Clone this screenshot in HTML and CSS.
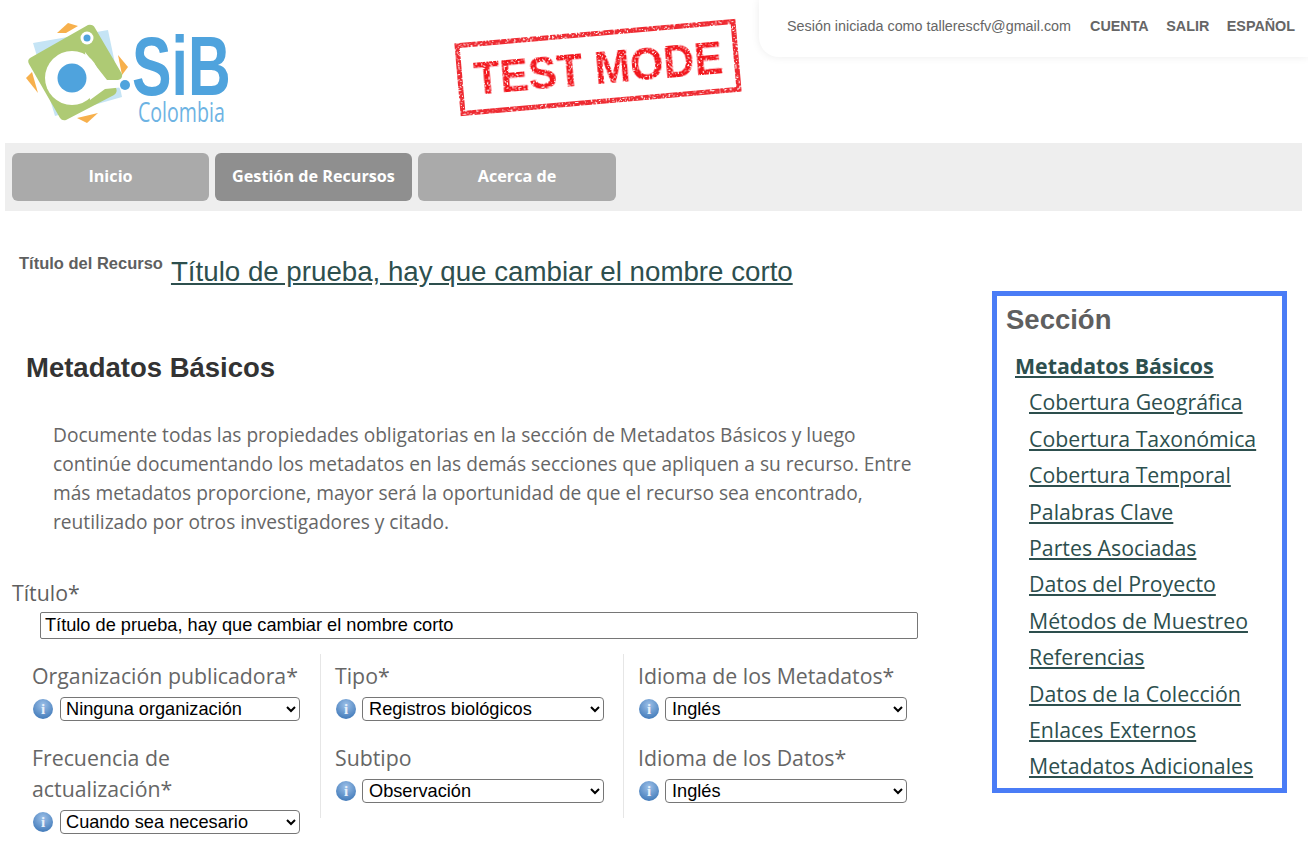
FILE: index.html
```html
<!DOCTYPE html>
<html lang="es">
<head>
<meta charset="UTF-8" />
<title>Metadatos Básicos</title>
<link rel="stylesheet" href="styles.css">
</head>
<body>

<svg class="defs" width="0" height="0">
  <filter id="rough" x="-5%" y="-5%" width="110%" height="110%">
    <feTurbulence type="fractalNoise" baseFrequency="0.55" numOctaves="2" seed="4" result="noise"/>
    <feColorMatrix in="noise" type="matrix" values="0 0 0 0 0  0 0 0 0 0  0 0 0 0 0  0 0 0 -7 4.9" result="holes"/>
    <feComposite in="SourceGraphic" in2="holes" operator="in"/>
    <feGaussianBlur stdDeviation="0.35"/>
  </filter>
</svg>

<div class="header">
  <svg class="logo" width="232" height="130" viewBox="0 0 232 130">
    <polygon points="57,33 68,23 78,26 66,33" fill="#f7b04c"/>
    <polygon points="118,55 128,67 122,75" fill="#f7b04c"/>
    <polygon points="26,78 32,72 38,93" fill="#f7b04c"/>
    <polygon points="77,118 98,113 87,123" fill="#f7b04c"/>
    <polygon points="33,43 108,30 122,97 55,116" fill="#c5e4f5"/>
    <path d="M30,58 L88,25 Q93,24 95,28 L122,74 Q123,79 118,80 L116,88 Q118,92 114,95 L66,120 Q62,121 60,118 L29,64 Q27,60 30,58 Z" fill="#aeca74"/>
    <circle cx="72" cy="78" r="27" fill="#fff"/>
    <polygon points="85,52 107,80 123,80 125,87 105,89 90,100" fill="#fff"/>
    <circle cx="72" cy="78" r="14.5" fill="#4fa3dd"/>
    <circle cx="87" cy="38" r="6.5" fill="#fff"/>
    <circle cx="87" cy="38" r="3.5" fill="#4fa3dd"/>
    <circle cx="125" cy="85" r="6.5" fill="#fff"/>
    <circle cx="125" cy="85" r="5" fill="#4fa3dd"/>
    <text transform="translate(132 95) scale(.705 1)" class="logo-sib">SiB</text>
    <text transform="translate(138 122) scale(.7 1)" class="logo-col">Colombia</text>
  </svg>

  <div class="stamp"><span>TEST MODE</span></div>

  <div class="user-bar">
    <span class="user-text">Sesión iniciada como tallerescfv@gmail.com</span>
    <a class="user-link">CUENTA</a>
    <a class="user-link">SALIR</a>
    <a class="user-link">ESPAÑOL</a>
  </div>
</div>

<div class="nav">
  <a class="nav-btn">Inicio</a>
  <a class="nav-btn active">Gestión de Recursos</a>
  <a class="nav-btn">Acerca de</a>
</div>

<div class="resource-title">
  <span class="resource-label">Título del Recurso</span>
  <a class="resource-link">Título de prueba, hay que cambiar el nombre corto</a>
</div>

<div class="content">
  <div class="main">
    <h1>Metadatos Básicos</h1>
    <p class="intro">Documente todas las propiedades obligatorias en la sección de Metadatos Básicos y luego continúe documentando los metadatos en las demás secciones que apliquen a su recurso. Entre más metadatos proporcione, mayor será la oportunidad de que el recurso sea encontrado, reutilizado por otros investigadores y citado.</p>

    <label class="title-label">Título*</label>
    <input class="title-input" type="text" value="Título de prueba, hay que cambiar el nombre corto">

    <div class="fields">
      <div class="col">
        <div class="field">
          <label>Organización publicadora*</label>
          <div class="control"><span class="info">i</span><select><option>Ninguna organización</option></select></div>
        </div>
        <div class="field">
          <label>Frecuencia de actualización*</label>
          <div class="control"><span class="info">i</span><select><option>Cuando sea necesario</option></select></div>
        </div>
      </div>
      <div class="col">
        <div class="field">
          <label>Tipo*</label>
          <div class="control"><span class="info">i</span><select><option>Registros biológicos</option></select></div>
        </div>
        <div class="field">
          <label>Subtipo</label>
          <div class="control"><span class="info">i</span><select><option>Observación</option></select></div>
        </div>
      </div>
      <div class="col">
        <div class="field">
          <label>Idioma de los Metadatos*</label>
          <div class="control"><span class="info">i</span><select><option>Inglés</option></select></div>
        </div>
        <div class="field">
          <label>Idioma de los Datos*</label>
          <div class="control"><span class="info">i</span><select><option>Inglés</option></select></div>
        </div>
      </div>
    </div>
  </div>

  <div class="side">
    <h2>Sección</h2>
    <a class="side-current">Metadatos Básicos</a>
    <a>Cobertura Geográfica</a>
    <a>Cobertura Taxonómica</a>
    <a>Cobertura Temporal</a>
    <a>Palabras Clave</a>
    <a>Partes Asociadas</a>
    <a>Datos del Proyecto</a>
    <a>Métodos de Muestreo</a>
    <a>Referencias</a>
    <a>Datos de la Colección</a>
    <a>Enlaces Externos</a>
    <a>Metadatos Adicionales</a>
  </div>
</div>

</body>
</html>
```

FILE: styles.css
```css
body {
  margin: 0;
  background: #fff;
  font-family: "Open Sans", sans-serif;
  color: #5f5f5f;
  overflow: hidden;
}
.defs {
  display: block;
  height: 0;
}

/* cabecera */
.header {
  height: 143px;
  position: relative;
}
.logo {
  display: block;
}
.logo-sib {
  font-family: "Liberation Sans", sans-serif;
  font-size: 84px;
  font-weight: bold;
  fill: #4fa3dd;
}
.logo-col {
  font-family: "Open Sans", sans-serif;
  font-size: 28px;
  fill: #6db3e3;
}
.stamp {
  position: absolute;
  left: 457px;
  top: 31px;
  width: 282px;
  height: 73px;
  box-sizing: border-box;
  border: 5px solid #ee2a30;
  transform: rotate(-5deg);
  display: flex;
  align-items: center;
  justify-content: center;
  filter: url(#rough);
}
.stamp span {
  font-family: "Liberation Sans", sans-serif;
  font-size: 46px;
  font-weight: bold;
  color: #f2141c;
  white-space: nowrap;
  transform: scaleX(0.93);
}
.user-bar {
  position: absolute;
  top: 0;
  right: 0;
  left: 759px;
  height: 57px;
  box-sizing: border-box;
  border-radius: 0 0 0 20px;
  box-shadow: 0 0 8px rgba(0,0,0,0.08);
  display: flex;
  align-items: flex-start;
  padding: 18px 13px 0 28px;
  font-family: "Liberation Sans", sans-serif;
  font-size: 14.35px;
  line-height: 17px;
  color: #666;
  white-space: nowrap;
}
.user-text {
  margin-right: 19px;
}
.user-link {
  font-weight: bold;
  margin-left: 17.5px;
  color: #666;
}
.user-text + .user-link {
  margin-left: 0;
}

/* menu */
.nav {
  margin: 0 6px 0 5px;
  height: 68px;
  background: #eeeeee;
  display: flex;
  gap: 6px;
  padding: 10px 7px 0;
  box-sizing: border-box;
}
.nav-btn {
  width: 197px;
  height: 48px;
  padding-bottom: 2px;
  box-sizing: border-box;
  background: #aaaaaa;
  border-radius: 6px;
  color: #fff;
  font-weight: bold;
  font-size: 16.2px;
  display: flex;
  align-items: center;
  justify-content: center;
}
.nav-btn:last-child {
  width: 198px;
}
.nav-btn.active {
  background: #8f8f8f;
}

.resource-title {
  display: flex;
  align-items: flex-start;
  padding: 45px 0 0 19px;
  height: 80px;
  box-sizing: border-box;
}
.resource-label {
  font-family: "Liberation Sans", sans-serif;
  font-size: 16.5px;
  font-weight: bold;
  line-height: 18px;
  margin-top: -2px;
  margin-right: 8px;
}
.resource-link {
  font-family: "Liberation Sans", sans-serif;
  font-size: 27.7px;
  line-height: 32px;
  color: #2d4f4e;
  text-decoration: underline;
}

.content {
  display: flex;
  align-items: flex-start;
}
.main {
  width: 918px;
  flex: none;
  padding-left: 12px;
  box-sizing: border-box;
}
h1 {
  font-family: "Liberation Sans", sans-serif;
  font-size: 27.5px;
  line-height: 32px;
  font-weight: bold;
  color: #333;
  margin: 0;
  padding: 61px 0 0 14px;
}
.intro {
  margin: 37px 0 0 41px;
  font-size: 19.15px;
  line-height: 29px;
  width: 865px;
  color: #666;
}
.title-label {
  display: block;
  margin-top: 42px;
  font-size: 21.3px;
  line-height: 28px;
}
.title-input {
  display: block;
  margin: 5px 0 0 28px;
  width: 878px;
  height: 27px;
  box-sizing: border-box;
  border: 1px solid #767676;
  border-radius: 2px;
  padding: 0 4px;
  font-family: "Liberation Sans", sans-serif;
  font-size: 18.2px;
  color: #000;
}
.fields {
  display: flex;
  align-items: flex-start;
  margin: 15px 0 0 5px;
}
.col {
  flex: none;
  width: 303px;
  padding: 6px 0 15px 14px;
  box-sizing: border-box;
  border-left: 1px solid #e6e6e6;
}
.col:first-child {
  border-left: 1px solid transparent;
}
.field {
  padding-bottom: 21px;
}
.field:last-child {
  padding-bottom: 0;
}
.field label {
  display: block;
  font-size: 21.3px;
  line-height: 31px;
  width: 270px;
  color: #666;
}
.control {
  display: flex;
  align-items: center;
  gap: 7px;
  margin-top: 6px;
}
.col + .col .control {
  gap: 6px;
}
.control select {
  width: 240px;
  height: 24px;
  padding-left: 1px;
  font-family: "Liberation Sans", sans-serif;
  font-size: 18.2px;
  background: #fff;
  color: #000;
  border: 1px solid #767676;
  border-radius: 4px;
}
.col + .col select {
  width: 242px;
  padding-left: 2px;
}
.info {
  width: 20px;
  height: 20px;
  margin-left: 1px;
  border-radius: 50%;
  background: radial-gradient(circle at 50% 30%, #9cc0e8, #3f78b8 85%);
  color: #e8f0fa;
  font-family: "Liberation Serif", serif;
  font-size: 15px;
  font-weight: bold;
  line-height: 20px;
  text-align: center;
  flex: none;
}

/* barra lateral */
.side {
  margin: 0 0 0 74px;
  width: 295px;
  height: 502px;
  box-sizing: border-box;
  border: 5px solid #4a7cf6;
  padding: 8px 0 0 9px;
}
.side h2 {
  margin: 0 0 12px;
  font-family: "Liberation Sans", sans-serif;
  font-size: 27.5px;
  line-height: 32px;
  color: #5f5f5f;
}
.side a {
  display: block;
  margin-left: 23px;
  font-size: 21.3px;
  line-height: 36.4px;
  color: #2d4f4e;
  text-decoration: underline;
}
.side a.side-current {
  margin-left: 9px;
  font-weight: bold;
}
```
